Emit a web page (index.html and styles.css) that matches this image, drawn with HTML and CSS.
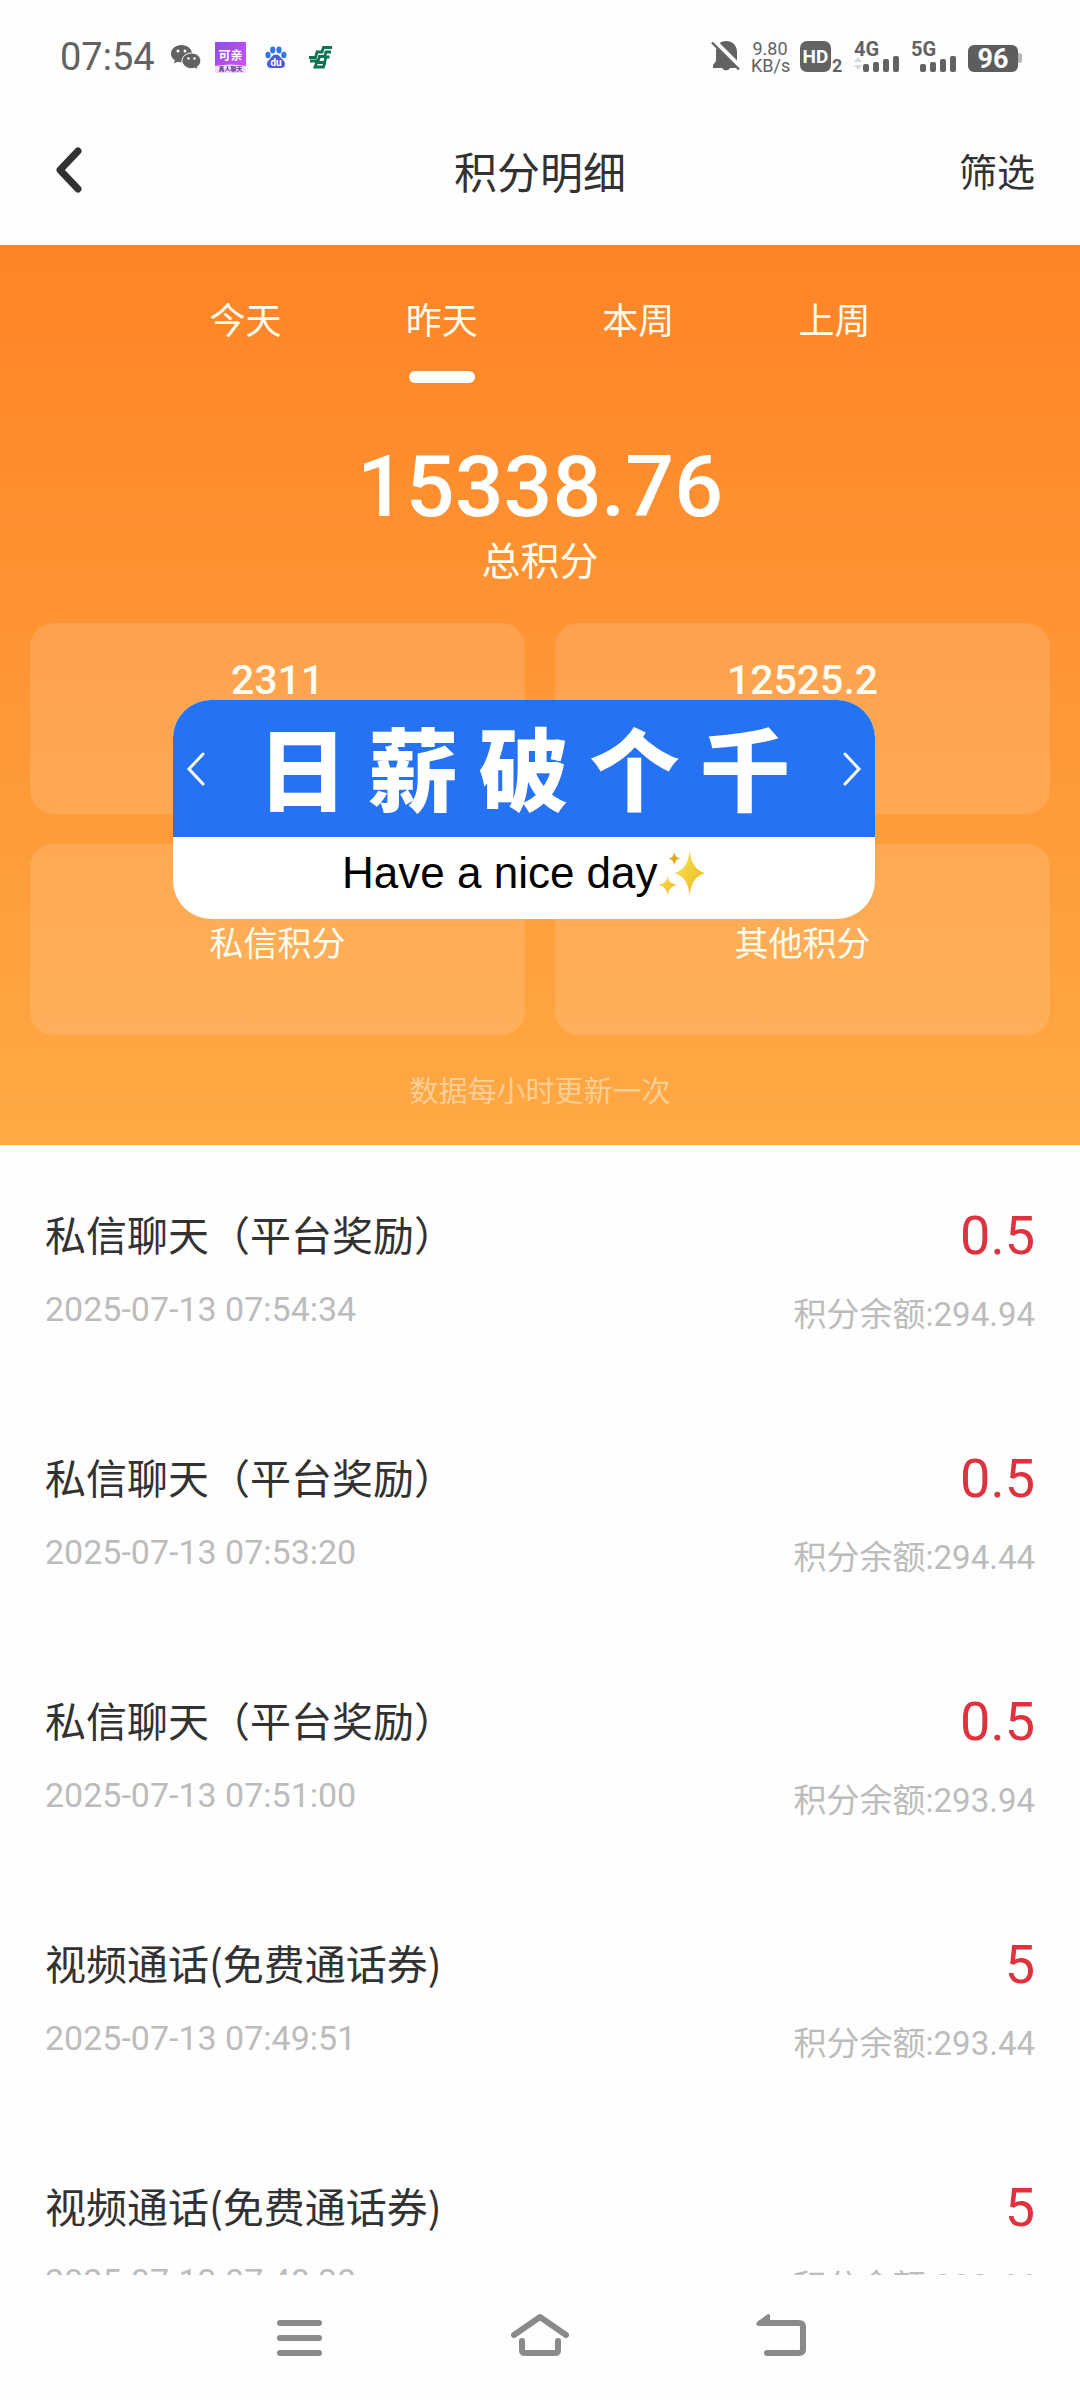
FILE: index.html
```html
<!DOCTYPE html>
<html lang="zh-CN">
<head>
<meta charset="utf-8">
<meta name="viewport" content="width=device-width, initial-scale=1">
<title>积分明细</title>
<link rel="stylesheet" href="styles.css">
</head>
<body>
<div class="screen">
  <div class="status">
    <div class="status-left">
      <span class="clock">07:54</span>
      <svg class="ico-wechat" width="30" height="26" viewBox="0 0 30 26" aria-hidden="true">
        <path fill="#626262" d="M10.500 1C4.700 1 0 4.900 0 9.700c0 2.700 1.500 5.100 3.900 6.700l-1 3.200 3.700-1.900c1.200.4 2.500.6 3.900.6 5.800 0 10.500-3.900 10.500-8.600S16.300 1 10.500 1z"/>
        <path fill="#626262" stroke="#fff" stroke-width="1" d="M20.500 9C15.300 9 11 12.500 11 16.800s4.300 7.800 9.500 7.800c1.200 0 2.300-.2 3.300-.5l3.300 1.700-.8-2.900c2.200-1.400 3.500-3.600 3.500-6.100C29.800 12.500 25.700 9 20.500 9z"/>
        <g fill="#fff"><circle cx="7" cy="7" r="1.500"/><circle cx="14" cy="7" r="1.500"/><circle cx="17.500" cy="14.500" r="1.200"/><circle cx="23.500" cy="14.500" r="1.200"/></g>
      </svg>
      <svg class="ico-keqin" width="31" height="31" viewBox="0 0 31 31" aria-hidden="true">
        <defs><linearGradient id="kq" x1="0" y1="0" x2="1" y2="1"><stop offset="0" stop-color="#8d4df2"/><stop offset="1" stop-color="#d850f0"/></linearGradient></defs>
        <rect width="31" height="31" fill="url(#kq)"/>
        <path fill="#f1dcfb" d="M0 24q15-3 31 0v7H0z"/>
        <text class="keqin-name" x="15.500" y="18">可亲</text>
        <text class="keqin-sub" x="15.500" y="29">真人聊天</text>
      </svg>
      <svg class="ico-baidu" width="22" height="23" viewBox="0 0 22 23" aria-hidden="true">
        <g fill="#2f76e8"><ellipse cx="3" cy="9" rx="2.600" ry="3.300"/><ellipse cx="7.700" cy="4" rx="2.600" ry="3.400"/><ellipse cx="14" cy="4" rx="2.600" ry="3.400"/><ellipse cx="18.900" cy="9" rx="2.600" ry="3.300"/></g>
        <path fill="#4a5bdd" d="M11 8.500c-3.500 0-4.300 3-6.300 4.800C2 15.700 1.500 17.500 2.300 19.700c1 2.700 4 2.300 8.700 2.300s7.700.4 8.700-2.300c.8-2.200.3-4-2.400-6.400C15.300 11.500 14.500 8.500 11 8.500z"/>
        <text class="baidu-du" x="11" y="20">du</text>
      </svg>
      <svg class="ico-post" width="23" height="24" viewBox="0 0 23 24" aria-hidden="true">
        <g fill="none" stroke="#0f7351" stroke-width="2.800"><path d="M23 2.500h-8.500L13 7H8l-1.500 5.500H0"/><path d="M22 7h-5l-1.500 4.500h-5L9 16H1"/><path d="M20.500 12H17l-1.500 5.500h-6l-1.500-1-2 5.500h8.500L16 17"/></g>
      </svg>
    </div>
    <div class="status-right">
      <svg width="28" height="32" viewBox="0 0 28 32" aria-hidden="true">
        <path fill="#626262" d="M14 0c6.500 0 11 4.500 11 11v11l2 5H18a4.500 4.500 0 0 1-8 0H1v-3l3-4v-9C4 4.500 8 0 14 0z"/>
        <path stroke="#fff" stroke-width="4.500" d="M2.500 0l25 25"/><path stroke="#626262" stroke-width="2.400" d="M0 1.500l27 27"/>
      </svg>
      <span class="speed"><span>9.80</span><span>KB/s</span></span>
      <svg width="43" height="32" viewBox="0 0 43 32" aria-hidden="true">
        <rect width="31" height="31" rx="7" fill="#626262"/>
        <text class="hd" x="15.500" y="22">HD</text><text class="hd-sim" x="32" y="31">2</text>
      </svg>
      <svg width="46" height="32" viewBox="0 0 46 32" aria-hidden="true">
        <text class="net" x="0" y="15">4G</text>
        <path fill="#d9d9d9" d="M0 21l4-5 4 5zM0 24l4 5 4-5z"/>
        <g fill="#626262"><rect x="9" y="23" width="6" height="8" rx="2"/><rect x="19" y="21" width="6" height="10" rx="2"/><rect x="29" y="18" width="6" height="13" rx="2"/><rect x="39" y="15" width="6" height="16" rx="2"/></g>
      </svg>
      <svg width="46" height="32" viewBox="0 0 46 32" aria-hidden="true">
        <text class="net" x="0" y="15">5G</text>
        <g fill="#626262"><rect x="9" y="23" width="6" height="8" rx="2"/><rect x="19" y="21" width="6" height="10" rx="2"/><rect x="29" y="18" width="6" height="13" rx="2"/><rect x="39" y="15" width="6" height="16" rx="2"/></g>
      </svg>
      <svg width="54" height="32" viewBox="0 0 54 32" aria-hidden="true">
        <rect x="47" y="12" width="7" height="10" rx="3" fill="#b5b5b5"/><rect y="4" width="50" height="27" rx="6" fill="#5d5d5d"/>
        <text class="battery" x="25" y="27">96</text>
      </svg>
    </div>
  </div>

  <header class="bar">
    <button class="back" type="button" aria-label="返回">
      <svg width="26" height="46" viewBox="0 0 26 46" aria-hidden="true"><path d="M22 4L4 23l18 19" fill="none" stroke="#323232" stroke-width="7" stroke-linecap="round" stroke-linejoin="round"/></svg>
    </button>
    <h1 class="title">积分明细</h1>
    <button class="filter" type="button">筛选</button>
  </header>

  <section class="hero">
    <nav class="tabs">
      <button class="tab" type="button">今天</button>
      <button class="tab tab-on" type="button">昨天</button>
      <button class="tab" type="button">本周</button>
      <button class="tab" type="button">上周</button>
    </nav>
    <p class="total">15338.76</p>
    <p class="total-label">总积分</p>
    <div class="stats">
      <div class="stat"><span class="stat-value">2311</span></div>
      <div class="stat"><span class="stat-value">12525.2</span></div>
      <div class="stat"><span class="stat-value"></span><span class="stat-label">私信积分</span></div>
      <div class="stat"><span class="stat-value"></span><span class="stat-label">其他积分</span></div>
    </div>
    <p class="hint">数据每小时更新一次</p>

    <aside class="sticker">
      <div class="sticker-top">
        <svg width="20" height="34" viewBox="0 0 20 34" aria-hidden="true"><path d="M17 2L3 17l14 15" fill="none" stroke="#fff" stroke-width="3" stroke-linecap="round"/></svg>
        <strong class="sticker-title">日 薪 破 个 千</strong>
        <svg width="20" height="34" viewBox="0 0 20 34" aria-hidden="true"><path d="M3 2l14 15L3 32" fill="none" stroke="#fff" stroke-width="3" stroke-linecap="round"/></svg>
      </div>
      <div class="sticker-bottom">
        <span>Have a nice day</span>
        <svg width="48" height="48" viewBox="0 0 50 48" aria-hidden="true">
          <defs><linearGradient id="sp" x1="0" y1="0" x2="1" y2="1"><stop offset="0" stop-color="#fbe55a"/><stop offset="1" stop-color="#e9b818"/></linearGradient></defs>
          <g fill="url(#sp)"><path d="M33 1c2 15 7 20 16 23-9 3-14 8-16 23-2-15-7-20-16-23 9-3 14-8 16-23z"/><path d="M10 27c1 6 4 8 10 9-6 2-9 5-10 11-1-6-4-9-10-11 6-1 9-3 10-9z"/><path fill="#dfa91c" d="M17 2c1 4 2 6 6 7-4 1-5 3-6 7-1-4-2-6-6-7 4-1 5-3 6-7z"/></g>
        </svg>
      </div>
    </aside>
  </section>

  <main class="list">
    <article class="row">
      <div class="row-main"><h2 class="name">私信聊天（平台奖励）</h2><time class="date">2025-07-13 07:54:34</time></div>
      <div class="row-side"><span class="amount">0.5</span><span class="balance">积分余额:294.94</span></div>
    </article>
    <article class="row">
      <div class="row-main"><h2 class="name">私信聊天（平台奖励）</h2><time class="date">2025-07-13 07:53:20</time></div>
      <div class="row-side"><span class="amount">0.5</span><span class="balance">积分余额:294.44</span></div>
    </article>
    <article class="row">
      <div class="row-main"><h2 class="name">私信聊天（平台奖励）</h2><time class="date">2025-07-13 07:51:00</time></div>
      <div class="row-side"><span class="amount">0.5</span><span class="balance">积分余额:293.94</span></div>
    </article>
    <article class="row">
      <div class="row-main"><h2 class="name">视频通话(免费通话券)</h2><time class="date">2025-07-13 07:49:51</time></div>
      <div class="row-side"><span class="amount">5</span><span class="balance">积分余额:293.44</span></div>
    </article>
    <article class="row">
      <div class="row-main"><h2 class="name">视频通话(免费通话券)</h2><time class="date">2025-07-13 07:48:38</time></div>
      <div class="row-side"><span class="amount">5</span><span class="balance">积分余额:288.44</span></div>
    </article>
  </main>

  <nav class="sysnav">
    <button class="key" type="button" aria-label="最近任务">
      <svg width="60" height="46" viewBox="0 0 60 46" aria-hidden="true"><path d="M11 10h39M11 25h39M11 40h39" stroke="#8a8a8a" stroke-width="6" stroke-linecap="round"/></svg>
    </button>
    <button class="key" type="button" aria-label="主页">
      <svg width="60" height="46" viewBox="0 0 60 46" aria-hidden="true"><g fill="none" stroke="#8a8a8a" stroke-width="6" stroke-linecap="round" stroke-linejoin="round"><path d="M4 22L30 4l26 18"/><path d="M12 28v9q0 3 3 3h30q3 0 3-3v-9"/></g></svg>
    </button>
    <button class="key" type="button" aria-label="返回上一级">
      <svg width="60" height="46" viewBox="0 0 60 46" aria-hidden="true"><path d="M16 40h32q4 0 4-4V14q0-4-4-4H10" fill="none" stroke="#8a8a8a" stroke-width="6" stroke-linecap="round"/><path fill="#8a8a8a" d="M6 9L17 1q3 0 2 4v8H8q-4 0-2-4z"/></svg>
    </button>
  </nav>
</div>
</body>
</html>
```
FILE: styles.css
```css
* { box-sizing: border-box; }

body {
  margin: 0;
  background: #fefefe;
  color: #323232;
  font-family: "Noto Sans CJK SC", sans-serif;
}

h1, h2, p { margin: 0; font-weight: 400; }

button {
  padding: 0;
  border: 0;
  background: none;
  color: inherit;
  font: inherit;
  cursor: pointer;
}

svg { display: block; flex: none; overflow: visible; }

.screen {
  display: flex;
  flex-direction: column;
  height: 100vh;
  overflow: hidden;
}

/* status bar */
.status {
  display: flex;
  justify-content: space-between;
  align-items: center;
  flex: none;
  height: 100px;
  padding: 14px 58px 0 60px;
  color: #626262;
}
.status-left, .status-right { display: flex; align-items: center; }
.clock { margin-right: 16px; font: 38px/40px Roboto, sans-serif; }
.ico-wechat { margin-right: 14px; }
.ico-keqin { margin-right: 19px; }
.ico-baidu { margin-right: 22px; }
.status-right { gap: 11px; }
.speed {
  display: flex;
  flex-direction: column;
  width: 38px;
  font: 18px/17px Roboto, sans-serif;
  text-align: center;
}
svg text { font-family: Roboto, sans-serif; font-weight: 700; }
.hd { fill: #fff; font-size: 19px; text-anchor: middle; }
.hd-sim { fill: #626262; font-size: 18px; }
.net { fill: #626262; font-size: 20px; }
.battery { fill: #fff; font-size: 27px; text-anchor: middle; }
.ico-keqin text { font-family: "Noto Sans CJK SC", sans-serif; text-anchor: middle; }
.keqin-name { fill: #fff; font-size: 12px; }
.keqin-sub { fill: #5b2f8c; font-size: 6px; }
.baidu-du { fill: #fff; font-size: 10px; text-anchor: middle; }

/* title bar */
.bar {
  display: grid;
  grid-template-columns: 1fr auto 1fr;
  align-items: center;
  flex: none;
  height: 145px;
  padding: 0 45px 6px;
}
.back { justify-self: start; padding-left: 11px; }
.title { font-size: 43px; line-height: 60px; }
.filter { justify-self: end; font-size: 38px; line-height: 60px; }

/* summary */
.hero {
  position: relative;
  flex: none;
  padding: 45px 30px 36px;
  background: linear-gradient(#ff8426, #ffa945);
  color: #fffdf0;
  text-align: center;
}
.tabs {
  display: grid;
  grid-template-columns: repeat(4, 1fr);
  width: 77%;
  margin: 0 auto;
}
.tab {
  display: flex;
  flex-direction: column;
  align-items: center;
  gap: 25px;
  height: 94px;
  font-size: 36px;
  line-height: 56px;
}
.tab-on::after {
  content: "";
  width: 66px;
  height: 12px;
  border-radius: 6px;
  background: #fff;
}
.total, .stat-value, .date, .amount, .balance {
  font-family: Roboto, "Noto Sans CJK SC", sans-serif;
}
.total {
  margin-top: 58px;
  color: #fff;
  font-size: 86px;
  font-weight: 500;
  line-height: 90px;
}
.total-label { font-size: 39px; line-height: 52px; }
.stats {
  display: grid;
  grid-template-columns: 1fr 1fr;
  gap: 30px;
  margin-top: 39px;
}
.stat {
  display: flex;
  flex-direction: column;
  height: 191px;
  padding-top: 33px;
  border-radius: 24px;
  background: rgba(255, 255, 255, 0.13);
}
.stat-value { height: 48px; font-size: 41px; font-weight: 500; line-height: 48px; }
.stat-label { font-size: 34px; line-height: 34px; }
.hint {
  margin-top: 34px;
  color: #ffce93;
  font-size: 29px;
  line-height: 40px;
}

/* floating banner */
.sticker {
  position: absolute;
  top: 455px;
  left: 16%;
  width: 65%;
  overflow: hidden;
  border-radius: 38px;
  background: #fff;
}
.sticker-top {
  display: flex;
  align-items: center;
  justify-content: space-between;
  height: 137px;
  padding: 0 13px;
  background: #2573f2;
}
.sticker-title {
  padding-bottom: 8px;
  color: #fff;
  font-family: STKaiti, KaiTi, "Noto Sans CJK SC", sans-serif;
  font-size: 90px;
  font-weight: 900;
  line-height: 128px;
  white-space: nowrap;
}
.sticker-bottom {
  display: flex;
  align-items: center;
  justify-content: center;
  height: 82px;
  padding-bottom: 10px;
  color: #000;
  font-family: "Liberation Sans", sans-serif;
  font-size: 44px;
}

/* records */
.list { flex: 1; min-height: 0; overflow: hidden; }
.row {
  display: flex;
  justify-content: space-between;
  height: 243px;
  padding: 58px 45px 0;
  border-bottom: 1px solid #fbfbfb;
}
.row-main, .row-side { display: flex; flex-direction: column; }
.row-side { align-items: flex-end; }
.name { font-size: 41px; line-height: 60px; }
.date { margin-top: 26px; color: #bcbcbc; font-size: 34px; line-height: 40px; }
.amount { color: #e0313f; font-size: 54px; line-height: 66px; }
.balance { margin-top: 26px; color: #bcbcbc; font-size: 33px; line-height: 40px; }

/* system keys */
.sysnav {
  display: grid;
  grid-template-columns: repeat(3, 1fr);
  align-items: center;
  flex: none;
  width: 67%;
  height: 125px;
  padding-bottom: 4px;
  margin: 0 auto;
}
.key { display: flex; justify-content: center; }
```
